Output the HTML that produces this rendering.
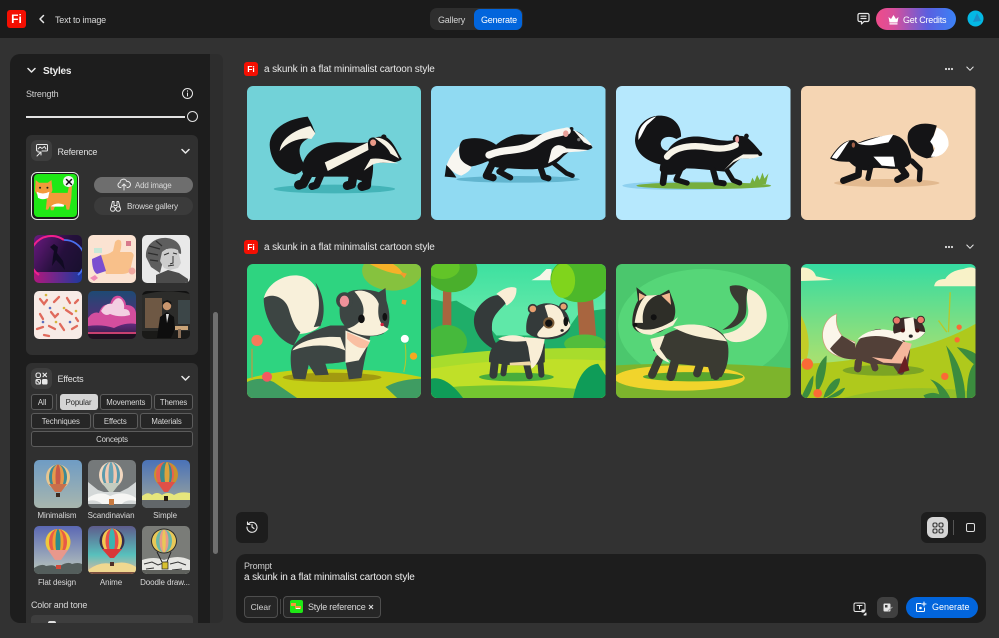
<!DOCTYPE html>
<html><head><meta charset="utf-8"><style>
*{box-sizing:border-box;margin:0;padding:0}
html,body{width:999px;height:638px;overflow:hidden;background:#323232}
body{position:relative;font-family:"Liberation Sans",sans-serif;color:#e4e4e4}
.a{position:absolute}
.t{position:absolute;white-space:nowrap;line-height:12px;font-size:9px;letter-spacing:-.2px;margin-top:1px}
.img{position:absolute;width:174.5px;height:134px;border-radius:6px;overflow:hidden}
.img svg{display:block;width:100%;height:100%}
.th{position:absolute;width:48px;height:48px;border-radius:5px;overflow:hidden}
.th svg{display:block;width:100%;height:100%}
.tag{position:absolute;height:16px;border:1px solid #5c5c5c;border-radius:3px;background:#262626;font-size:7.800px;line-height:15px;text-align:center;color:#d8d8d8;letter-spacing:-.15px}
.lab{position:absolute;width:60px;text-align:center;font-size:8px;line-height:10px;color:#d8d8d8;white-space:nowrap;letter-spacing:-.1px}
.fi{position:absolute;background:#f40f02;border-radius:3px;color:#fff;font-weight:bold;text-align:center}
svg.i{position:absolute;fill:none;stroke:#e8e8e8;stroke-width:1.2;stroke-linecap:round;stroke-linejoin:round}
.l{fill:none;stroke-linecap:round;stroke-linejoin:round}
</style></head><body>

<!-- header -->
<div class="a" style="left:0;top:0;width:999px;height:38px;background:#1b1b1b"></div>
<div class="fi" style="left:7px;top:9.500px;width:19px;height:18.500px;font-size:12px;line-height:18.500px">Fi</div>
<svg class="i" style="left:38px;top:14px;stroke-width:1.500" width="8" height="10" viewBox="0 0 8 10"><path d="M5.500 1.500 2 5l3.500 3.500"/></svg>
<div class="t" style="left:55px;top:13px;color:#d8d8d8">Text to image</div>
<div class="a" style="left:430px;top:8px;width:93px;height:22px;background:#2e2e2e;border-radius:7px"></div>
<div class="a" style="left:474px;top:8.500px;width:48px;height:21px;background:#0265dc;border-radius:6px"></div>
<div class="t" style="left:438px;top:13px;color:#d0d0d0">Gallery</div>
<div class="t" style="left:481px;top:13px;color:#fff">Generate</div>
<svg class="i" style="left:857px;top:12px" width="13" height="14" viewBox="0 0 13 14"><path d="M2.500 1.500h8a1.500 1.500 0 0 1 1.500 1.500v5a1.500 1.500 0 0 1-1.500 1.500H7L4.500 12V9.500h-2A1.500 1.500 0 0 1 1 8V3a1.500 1.500 0 0 1 1.500-1.500zM4 4.200h5M4 6.500h5"/></svg>
<div class="a" style="left:876px;top:8px;width:80px;height:22px;border-radius:11px;background:linear-gradient(90deg,#ee4c8a 0%,#d84f9b 22%,#5a5fe0 65%,#3b82f6 100%)"></div>
<svg class="a" style="left:887px;top:14px" width="13" height="11" viewBox="0 0 13 11"><path fill="#fff" d="M1.500 3 4 5 6.500 1 9 5l2.500-2-1 5.500h-8zM2.500 9.200h8v1.300h-8z"/></svg>
<div class="t" style="left:903px;top:13px;color:#fff">Get Credits</div>
<svg class="a" style="left:967px;top:10px" width="17" height="17" viewBox="0 0 17 17"><circle cx="8.500" cy="8.500" r="8" fill="#04b8e4"/><path d="M10 3 14 11 6 12z" fill="#1a8fc8"/></svg>

<!-- sidebar -->
<div class="a" style="left:205px;top:54px;width:18px;height:569px;background:#2d2d2d;border-radius:0 6px 6px 0"></div>
<div class="a" style="left:213px;top:312px;width:5px;height:242px;background:#6f6f6f;border-radius:3px"></div>
<div class="a" style="left:10px;top:54px;width:200px;height:569px;background:#1d1d1d;border-radius:10px 0 0 10px"></div>
<svg class="i" style="left:27px;top:67px;stroke-width:1.500" width="9" height="7" viewBox="0 0 9 7"><path d="M1 1.500 4.500 5 8 1.500"/></svg>
<div class="t" style="left:43px;top:65px;font-size:10px;font-weight:bold;color:#eee">Styles</div>
<div class="t" style="left:26px;top:87px;color:#cfcfcf">Strength</div>
<svg class="i" style="left:181px;top:87px;stroke-width:1" width="13" height="13" viewBox="0 0 13 13"><circle cx="6.500" cy="6.500" r="5"/><path d="M6.500 6v3M6.500 3.800v.4"/></svg>
<div class="a" style="left:26px;top:116px;width:159px;height:1.500px;background:#e2e2e2"></div>
<div class="a" style="left:187px;top:111px;width:11px;height:11px;border:1.300px solid #e2e2e2;border-radius:50%"></div>

<!-- reference card -->
<div class="a" style="left:26px;top:135px;width:172px;height:220px;background:#303030;border-radius:6px"></div>
<div class="a" style="left:31px;top:140px;width:21px;height:21px;background:#3e3e3e;border-radius:6px"></div>
<svg class="i" style="left:35px;top:143px;stroke-width:1" width="14" height="14" viewBox="0 0 14 14"><path d="M3 8H2.500a1 1 0 0 1-1-1V2.500a1 1 0 0 1 1-1h9a1 1 0 0 1 1 1V7a1 1 0 0 1-1 1H7"/><path d="M3 6l2-2 2 1.500L9.500 3.500 11 6M2 13l4-4M3 9h3v3"/></svg>
<div class="t" style="left:57.500px;top:145px;color:#e0e0e0">Reference</div>
<svg class="i" style="left:181px;top:148px;stroke-width:1.500" width="9" height="7" viewBox="0 0 9 7"><path d="M1 1.500 4.500 5 8 1.500"/></svg>
<div class="a" style="left:31px;top:172px;width:47.500px;height:47.500px;border:1.200px solid #e8e8e8;border-radius:6px;background:#1b1b1b"></div>
<div class="a" style="left:33.500px;top:174px;width:43px;height:43px;border-radius:4px;overflow:hidden">
<svg width="43" height="43" viewBox="100 522 128 128" style="display:block"><rect x="100" y="522" width="128" height="128" fill="#1fe816"/><path d="M135 578h65l4-20h9l-2 36-6 34h-8l-3-14h-30l-6 16h-8l-2-14-6 12h-7l3-28z" fill="#f39a3a"/><path d="M150 618q20-14 40-4l-2 5h-28z" fill="#fff"/><path d="M105 540l10 8h26l11-8 3 30q-5 18-25 20-22-1-27-18z" fill="#f39a3a"/><path d="M108 575q18 10 38 0l-4 18q-16 8-30 0z" fill="#fff"/><circle cx="118" cy="563" r="3" fill="#222"/><circle cx="140" cy="563" r="3" fill="#222"/></svg></div>
<div class="a" style="left:63px;top:176px;width:10.500px;height:10.500px;background:#f4f4f4;border-radius:50%"></div>
<svg class="a" style="left:64.500px;top:177.500px" width="8" height="8" viewBox="0 0 8 8"><path d="M1.500 1.500l5 5M6.500 1.500l-5 5" stroke="#111" stroke-width="1.500" stroke-linecap="round"/></svg>
<div class="a" style="left:94px;top:176.500px;width:99px;height:16px;background:#6e6e6e;border-radius:8px"></div>
<svg class="i" style="left:117px;top:178px;stroke-width:1" width="14" height="13" viewBox="0 0 14 13"><path d="M4 9.500H3A2.500 2.500 0 0 1 3 4.600 3.500 3.500 0 0 1 9.800 3.500 3 3 0 0 1 11 9.500h-1M7 12V6M5 8l2-2 2 2"/></svg>
<div class="t" style="left:135px;top:178.500px;font-size:8px;color:#d8d8d8">Add image</div>
<div class="a" style="left:94px;top:197px;width:99px;height:18px;background:#3b3b3b;border-radius:9px"></div>
<svg class="i" style="left:109px;top:200px;stroke-width:1" width="13" height="13" viewBox="0 0 13 13"><path d="M3.500 1.500h1.500v4h3v-4h1.500l1.500 6M1.500 9a2.300 2.300 0 1 0 4.600 0 2.300 2.300 0 1 0-4.600 0zM6.900 9a2.300 2.300 0 1 0 4.600 0 2.300 2.300 0 1 0-4.600 0zM3.500 1.500l-1.500 6"/></svg>
<div class="t" style="left:127px;top:200px;font-size:8.200px;color:#d8d8d8">Browse gallery</div>

<!-- ref thumbs -->
<div class="th" style="left:33.500px;top:234.500px"><svg viewBox="0 0 48 48"><defs><linearGradient id="n1" x1="0" y1="0" x2="1" y2="0"><stop offset="0" stop-color="#b0187c"/><stop offset="1" stop-color="#1c3aa0"/></linearGradient><linearGradient id="n0" x1="0" y1="0" x2="1" y2=".6"><stop offset="0" stop-color="#6a1a80"/><stop offset=".6" stop-color="#25103c"/><stop offset="1" stop-color="#1a1030"/></linearGradient></defs><rect width="48" height="48" fill="url(#n0)"/><rect y="37" width="48" height="11" fill="url(#n1)"/><path d="M5 40A20 20 0 0 1 30 5" fill="none" stroke="#f0208c" stroke-width="2"/><path d="M30 5A20 20 0 0 1 44 40" fill="none" stroke="#4a70f0" stroke-width="1.800"/><path d="M16 12l4-3 4 3-1 6 6 8 2 9-5-6-4-4-4 6 1-9 1-6z" fill="#100a22"/></svg></div>
<div class="th" style="left:87.500px;top:234.500px"><svg viewBox="0 0 48 48"><rect width="48" height="48" fill="#fbe3d2"/><path d="M13 20q7 0 12-4l2-9q3-4 6-1 1 5-1 11h11q4 2 2 6l-3 13q-2 3-8 3H18z" fill="#f8c08a"/><path d="M4 24l9-4 5 16-9 3q-5-3-5-15z" fill="#7a4ed0"/><rect x="6" y="13" width="8" height="5" fill="#c8e8d8"/><rect x="38" y="6" width="5" height="5" fill="#d87a8c"/><circle cx="44" cy="36" r="3.500" fill="#f0a8a0"/><path d="M2 43l5-3 3 3-4 3z" fill="#f08ab4"/></svg></div>
<div class="th" style="left:142px;top:234.500px"><svg viewBox="0 0 48 48"><rect width="48" height="48" fill="#e9e9e9"/><path d="M4 22C3 9 14 2 25 3 34 4 40 10 39 19L24 14 20 30 18 38 9 32z" fill="#5e5e5e"/><path d="M20 17Q27 11 36 15L39 28 36 33 28 35 22 33 18 26z" fill="#cdcdcd"/><path d="M14 48V40L26 35 37 38 46 44V48z" fill="#4c4c4c"/><path d="M22 20l5-2M31 18l4 1M31 21v7l-3 1M26 31l6-1" stroke="#333" fill="none"/><path d="M7 11l11 3M6 18l10 2M8 25l8 1M14 6l6 5" stroke="#2e2e2e" stroke-width="1.300"/></svg></div>
<div class="th" style="left:33.500px;top:291px"><svg viewBox="0 0 48 48"><rect width="48" height="48" fill="#f7ebe6"/><g fill="none" stroke="#e06a5c" stroke-width="2.300" stroke-linecap="round"><path d="M6 8l4 5 3-4M20 11l5-5M33 7l3 5M41 12l3-3M6 23l3 5M17 21l4 5 3-3M32 19l6 4M42 27l2 3M3 38l6-2M15 35l6 3M26 33l4 6M38 38l5-3M10 44l5 1"/></g><g fill="#d4b43c"><circle cx="12" cy="4" r="1.300"/><circle cx="30" cy="17" r="1.300"/><circle cx="22" cy="31" r="1.300"/><circle cx="42" cy="20" r="1.300"/></g><g fill="#5a6fc0"><circle cx="16" cy="17" r="1.300"/><circle cx="36" cy="31" r="1.300"/><circle cx="9" cy="31" r="1.300"/></g></svg></div>
<div class="th" style="left:87.500px;top:291px"><svg viewBox="0 0 48 48"><defs><linearGradient id="c1" x1="0" y1="0" x2="0" y2="1"><stop offset="0" stop-color="#1e4a74"/><stop offset=".7" stop-color="#5d2a78"/><stop offset="1" stop-color="#2a1838"/></linearGradient></defs><rect width="48" height="48" fill="url(#c1)"/><path d="M0 27Q5 20 11 22 14 12 22 14 24 3 32 5 38 9 38 14 47 14 48 22V33Q38 31 26 37 14 33 0 35z" fill="#d44e9e"/><path d="M13 20Q18 11 24 13 28 5 33 8 37 12 36 18 42 18 42 24 32 27 22 23 17 26 13 20z" fill="#f3cfe2"/><rect y="41" width="48" height="2" fill="#c84070"/><rect y="43" width="48" height="5" fill="#1e1020"/></svg></div>
<div class="th" style="left:142px;top:291px"><svg viewBox="0 0 48 48"><rect width="48" height="48" fill="#2c2c2a"/><path d="M0 4Q24-3 48 3V0H0z" fill="#111"/><rect x="3" y="7" width="17" height="30" fill="#6e5844"/><rect x="36" y="9" width="12" height="24" fill="#3c4648"/><rect y="40" width="48" height="8" fill="#1a1a18"/><circle cx="25" cy="15" r="4.200" fill="#c9966e"/><path d="M20.800 14q4-6 8.500 0v-3l-4-2-4.500 2z" fill="#111"/><path d="M15 47l3-21 7-5 7 5 1 12-4 9z" fill="#0e0e0e"/><rect x="33" y="35" width="13" height="4" fill="#caa478"/><rect x="36" y="38" width="3" height="9" fill="#8a6f58"/><path d="M24 23l1 9 2-9z" fill="#ddd"/></svg></div>

<!-- effects card -->
<div class="a" style="left:26px;top:362.500px;width:172px;height:260.500px;background:#303030;border-radius:6px 6px 0 0"></div>
<div class="a" style="left:31px;top:368px;width:21px;height:21px;background:#3e3e3e;border-radius:6px"></div>
<svg class="i" style="left:35px;top:372px;stroke-width:1.100" width="13" height="13" viewBox="0 0 13 13"><rect x="1" y="1" width="4.500" height="4.500" rx="1.800"/><path d="M8 1.200l3.500 3.500M11.500 1.200 8 4.700"/><rect x="1" y="7.500" width="4.500" height="4.500" rx="1"/><path d="M1.500 8l3.500 3.500"/><rect x="7.500" y="7.500" width="4.500" height="4.500" rx="1" fill="#e8e8e8"/></svg>
<div class="t" style="left:57.500px;top:372px;color:#e0e0e0">Effects</div>
<svg class="i" style="left:181px;top:375px;stroke-width:1.500" width="9" height="7" viewBox="0 0 9 7"><path d="M1 1.500 4.500 5 8 1.500"/></svg>
<div class="tag" style="left:31px;top:394px;width:22px">All</div>
<div class="a" style="left:55.500px;top:394px;width:1px;height:16px;background:#555"></div>
<div class="tag" style="left:59.500px;top:394px;width:38px;background:#d5d5d5;border-color:#d5d5d5;color:#2a2a2a">Popular</div>
<div class="tag" style="left:100px;top:394px;width:51.500px">Movements</div>
<div class="tag" style="left:154px;top:394px;width:39px">Themes</div>
<div class="tag" style="left:31px;top:412.500px;width:59.500px">Techniques</div>
<div class="tag" style="left:93px;top:412.500px;width:44.500px">Effects</div>
<div class="tag" style="left:140px;top:412.500px;width:53px">Materials</div>
<div class="tag" style="left:31px;top:431px;width:162px">Concepts</div>

<!-- balloons -->
<div class="th" style="left:33.500px;top:459.500px"><svg viewBox="0 0 48 48"><defs><linearGradient id="b1" x1="0" y1="0" x2="0" y2="1"><stop offset="0" stop-color="#6f9cc4"/><stop offset="1" stop-color="#a8b6ae"/></linearGradient></defs><rect width="48" height="48" fill="url(#b1)"/><ellipse cx="24" cy="17" rx="12" ry="12.500" fill="#e8c690"/><ellipse cx="24" cy="17" rx="9" ry="12.500" fill="#3c8a96"/><ellipse cx="24" cy="17" rx="6" ry="12.500" fill="#e49a4c"/><ellipse cx="24" cy="17" rx="2.500" ry="12.500" fill="#c85a48"/><path d="M15 24l6 8h6l6-8z" fill="#c8704c"/><rect x="22" y="33" width="4" height="4" fill="#3a2a20"/></svg></div>
<div class="th" style="left:87.500px;top:459.500px"><svg viewBox="0 0 48 48"><rect width="48" height="48" fill="#75797a"/><path d="M0 22l10 8 6 2 16 0 8-4 8-6v22H0z" fill="#d4d8d8"/><path d="M0 38q12-8 22-2 14-6 26 2v3q-10-2-14 3H14q-6-5-14-3z" fill="#f6f6f4"/><rect y="44" width="48" height="4" fill="#64696a"/><ellipse cx="23" cy="15" rx="12" ry="13" fill="#f2d8c0"/><ellipse cx="23" cy="15" rx="9" ry="13" fill="#5a9aac"/><ellipse cx="23" cy="15" rx="6" ry="13" fill="#f2c8b0"/><ellipse cx="23" cy="15" rx="2.500" ry="13" fill="#6aa4b4"/><path d="M14 23l7 9h4l7-9z" fill="#c4ccc0"/><rect x="21" y="39" width="5" height="6" fill="#c87a40"/></svg></div>
<div class="th" style="left:142px;top:459.500px"><svg viewBox="0 0 48 48"><defs><linearGradient id="b3" x1="0" y1="0" x2="0" y2="1"><stop offset="0" stop-color="#4a72b8"/><stop offset="1" stop-color="#a2a89a"/></linearGradient></defs><rect width="48" height="48" fill="url(#b3)"/><path d="M0 36q6-5 10-1 5-4 10 0 6-4 12 0 6-4 16-2v7H0z" fill="#e6e67c"/><rect y="40" width="48" height="8" fill="#62676a"/><ellipse cx="24" cy="14.500" rx="12" ry="12.500" fill="#c8922c"/><ellipse cx="23" cy="14.500" rx="9" ry="12.500" fill="#e86050"/><ellipse cx="24" cy="14.500" rx="6" ry="12.500" fill="#3b8a8c"/><ellipse cx="25" cy="14.500" rx="2.500" ry="12.500" fill="#dca23c"/><path d="M15 22l7 10h4l7-10z" fill="#e05048"/><rect x="22" y="36" width="4" height="5" fill="#2a2018"/></svg></div>
<div class="lab" style="left:27px;top:511px">Minimalism</div>
<div class="lab" style="left:81px;top:511px">Scandinavian</div>
<div class="lab" style="left:135px;top:511px">Simple</div>
<div class="th" style="left:33.500px;top:526px"><svg viewBox="0 0 48 48"><defs><linearGradient id="b4" x1="0" y1="0" x2="0" y2="1"><stop offset="0" stop-color="#5b68b4"/><stop offset="1" stop-color="#bccabc"/></linearGradient></defs><rect width="48" height="48" fill="url(#b4)"/><path d="M0 42q8-5 12-2 8-2 10 1l4-1q8-5 12-2 6-2 10 0v10H0z" fill="#545e5c"/><ellipse cx="24" cy="16" rx="12.500" ry="13" fill="#f0c83c"/><ellipse cx="24" cy="16" rx="9" ry="13" fill="#e85a48"/><ellipse cx="24" cy="16" rx="5.500" ry="13" fill="#f0a030"/><ellipse cx="24" cy="16" rx="2.500" ry="13" fill="#2c8c8c"/><path d="M14 24l7 10h6l7-10z" fill="#e8988c"/><rect x="22" y="39" width="5" height="4" fill="#d04838"/></svg></div>
<div class="th" style="left:87.500px;top:526px"><svg viewBox="0 0 48 48"><defs><linearGradient id="b5" x1="0" y1="0" x2="0" y2="1"><stop offset="0" stop-color="#5e5c8c"/><stop offset=".6" stop-color="#58c0bc"/><stop offset="1" stop-color="#e4b8a0"/></linearGradient></defs><rect width="48" height="48" fill="url(#b5)"/><path d="M0 44q12-9 24-6 14-4 24 3v7H0z" fill="#f0d890"/><path d="M0 46h48v2H0z" fill="#7c5040"/><ellipse cx="24" cy="15" rx="12.500" ry="12.500" fill="#3a2c48"/><ellipse cx="24" cy="15" rx="10" ry="12.500" fill="#f2c850"/><ellipse cx="24" cy="15" rx="6.500" ry="12.500" fill="#e8504c"/><ellipse cx="24" cy="15" rx="3" ry="12.500" fill="#3cb4b0"/><path d="M14 23l8 9h4l8-9z" fill="#d83838"/><rect x="22" y="36" width="4" height="4" fill="#503028"/></svg></div>
<div class="th" style="left:142px;top:526px"><svg viewBox="0 0 48 48"><rect width="48" height="48" fill="#7a7c78"/><path d="M0 34q12-4 22 0 14-6 26 0v14H0z" fill="#e6e6e2"/><path d="M2 38l8-2 6 3 8-3M28 38l8-2 8 3M4 43l8-1M30 44l10-1" stroke="#333" fill="none"/><rect y="44" width="48" height="4" fill="#5e605c"/><ellipse cx="22" cy="15" rx="13" ry="12.500" fill="#2a2a2a"/><ellipse cx="22" cy="15" rx="12" ry="11.500" fill="#e8c858"/><ellipse cx="22" cy="15" rx="8" ry="11.500" fill="#6ab8a8"/><ellipse cx="22" cy="15" rx="4.500" ry="11.500" fill="#e89a88"/><ellipse cx="22" cy="15" rx="1.800" ry="11.500" fill="#e8c858"/><path d="M15 26l5 10M29 26l-4 10" stroke="#222"/><rect x="20" y="36" width="6" height="7" fill="#d8c030" stroke="#222" stroke-width=".7"/></svg></div>
<div class="lab" style="left:27px;top:577.500px">Flat design</div>
<div class="lab" style="left:81px;top:577.500px">Anime</div>
<div class="lab" style="left:135px;top:577.500px">Doodle draw...</div>
<div class="t" style="left:31px;top:598px;color:#d8d8d8">Color and tone</div>
<div class="a" style="left:31px;top:615px;width:162px;height:8px;background:#3e3e3e;border-radius:4px 4px 0 0"></div>
<div class="a" style="left:48px;top:621px;width:8px;height:2px;background:#e0e0e0;border-radius:4px 4px 0 0"></div>

<!-- row headers -->
<div class="fi" style="left:244px;top:62px;width:14px;height:14px;font-size:8.500px;line-height:14px">Fi</div>
<div class="t" style="left:264px;top:63px;font-size:10px;color:#e8e8e8;letter-spacing:-.13px">a skunk in a flat minimalist cartoon style</div>
<svg class="a" style="left:944px;top:67px" width="10" height="4"><circle cx="2" cy="2" r="1.100" fill="#ddd"/><circle cx="5" cy="2" r="1.100" fill="#ddd"/><circle cx="8" cy="2" r="1.100" fill="#ddd"/></svg>
<svg class="i" style="left:966px;top:66px;stroke-width:1" width="8" height="6" viewBox="0 0 8 6"><path d="M.8 1 4 4.300 7.200 1"/></svg>
<div class="fi" style="left:244px;top:239.500px;width:14px;height:14px;font-size:8.500px;line-height:14px">Fi</div>
<div class="t" style="left:264px;top:240.500px;font-size:10px;color:#e8e8e8;letter-spacing:-.13px">a skunk in a flat minimalist cartoon style</div>
<svg class="a" style="left:944px;top:245px" width="10" height="4"><circle cx="2" cy="2" r="1.100" fill="#ddd"/><circle cx="5" cy="2" r="1.100" fill="#ddd"/><circle cx="8" cy="2" r="1.100" fill="#ddd"/></svg>
<svg class="i" style="left:966px;top:244px;stroke-width:1" width="8" height="6" viewBox="0 0 8 6"><path d="M.8 1 4 4.300 7.200 1"/></svg>

<!-- image 1 -->
<div class="img" style="left:246.700px;top:86px"><svg viewBox="50 93 523 402" preserveAspectRatio="none"><rect x="50" y="93" width="523" height="402" fill="#72d2d8"/><ellipse cx="312" cy="402" rx="182" ry="13" fill="#44b4b8"/>
<path d="M195 358C150 352 120 320 118 270 118 225 165 192 232 185L245 210 255 235 235 250C205 262 200 290 218 322 225 340 215 352 195 358z" fill="#141416"/>
<path d="M148 288C152 250 192 225 240 213L255 235 243 252C210 246 172 260 148 288z" fill="#f6f2e4"/>
<path d="M215 345C215 295 260 265 310 262 350 260 390 268 420 260L428 330C428 350 426 370 420 385L350 365 270 365C240 368 215 365 215 345z" fill="#141416"/>
<g class="l" stroke="#141416"><path d="M240 345 218 386 205 390" stroke-width="28"/><path d="M275 350 258 390 245 394" stroke-width="22"/><path d="M370 350 364 388 350 392" stroke-width="26"/><path d="M410 345 408 390 395 394" stroke-width="28"/></g>
<path d="M412 268C420 248 445 240 470 248 490 262 500 290 514 312 505 323 470 326 440 322L415 330z" fill="#141416"/><circle cx="428" cy="262" r="15" fill="#141416"/><circle cx="460" cy="246" r="8" fill="#141416"/>
<path d="M283 322 412 262 414 285 292 348z" fill="#f6f2e4"/><path d="M432 248C465 245 492 275 506 311L480 296C472 275 452 264 432 248z" fill="#f6f2e4"/><path d="M400 347 420 312C445 306 480 318 503 325 470 324 440 320 425 330z" fill="#f6f2e4"/><ellipse cx="428" cy="263" rx="9" ry="10" fill="#eb9a88"/></svg></div>
<!-- image 2 -->
<div class="img" style="left:431.400px;top:86px"><svg viewBox="604 93 523 402" preserveAspectRatio="none"><rect x="604" y="93" width="523" height="402" fill="#90daf2"/><ellipse cx="865" cy="373" rx="185" ry="10" fill="#62b5cf"/>
<path d="M800 270C770 248 730 245 700 255 680 270 690 310 700 335 730 340 770 320 790 312z" fill="#141416"/>
<path d="M690 272C670 290 655 315 650 335 665 345 680 360 695 362 720 350 725 340 725 335 700 325 680 310 690 272z" fill="#f8f6f0"/>
<path d="M650 330 645 365 680 368C670 350 660 340 650 330z" fill="#141416"/>
<path d="M775 310C775 280 830 235 880 238 920 242 960 235 1000 225L1020 290C1000 300 985 325 975 325 950 345 900 345 840 340 800 340 775 335 775 310z" fill="#141416"/>
<g class="l" stroke="#141416"><path d="M790 322 770 362 790 368" stroke-width="22"/><path d="M830 330 808 350 842 368" stroke-width="17"/><path d="M930 330 942 366 956 370" stroke-width="18"/><path d="M972 325 1010 355 1028 362" stroke-width="14"/></g>
<path d="M995 235C1020 220 1050 225 1065 248 1075 262 1085 268 1088 278 1080 288 1040 292 1010 288 990 280 985 250 995 235z" fill="#141416"/><circle cx="1007" cy="235" r="13" fill="#141416"/><circle cx="1025" cy="222" r="6" fill="#141416"/>
<path d="M778 300C830 277 880 295 925 257 950 237 990 234 1012 228" class="l" stroke="#f8f6f0" stroke-width="22"/><path d="M1030 224C1055 235 1080 260 1088 275L1062 262z" fill="#f8f6f0"/>
<path d="M955 325 965 285C975 268 990 265 1010 280L1075 285C1050 293 1020 288 1000 295 985 308 970 318 955 325z" fill="#f8f6f0"/><ellipse cx="1008" cy="236" rx="8" ry="10" fill="#e8a098"/><circle cx="1047" cy="254" r="5" fill="#777"/><circle cx="1082" cy="274" r="3.500" fill="#111"/></svg></div>
<!-- image 3 -->
<div class="img" style="left:616.300px;top:86px"><svg viewBox="19 93 523 402" preserveAspectRatio="none"><rect x="19" y="93" width="523" height="402" fill="#b6e8fd"/><ellipse cx="220" cy="392" rx="182" ry="13" fill="#8ed0ef"/><ellipse cx="282" cy="392" rx="202" ry="10" fill="#76ae3e"/><path d="M420 388l8-20 6 12 8-20 8 15 8-22 6 18 12-16-8 32z" fill="#76ae3e"/>
<path d="M165 330C115 325 78 295 76 258 76 215 110 182 150 182 190 182 215 210 214 245L200 252C180 240 155 245 153 265 153 285 172 290 180 285z" fill="#141416"/>
<path d="M86 245C86 215 110 192 140 184L112 210C102 225 95 245 86 255z" fill="#fff"/>
<path d="M150 345C150 320 165 300 175 285 195 250 240 242 270 245 310 250 340 262 375 255L400 250 420 270 395 310C375 320 360 345 345 350 300 345 260 340 230 340 200 365 160 365 150 345z" fill="#141416"/>
<g class="l" stroke="#141416"><path d="M165 345 160 383" stroke-width="20"/><path d="M212 345 199 374 232 384" stroke-width="16"/><path d="M310 345 320 382 342 385" stroke-width="18"/><path d="M345 335 370 376 390 384" stroke-width="15"/></g>
<path d="M370 262C375 240 395 238 415 250 435 268 448 285 458 297 440 312 410 312 395 310z" fill="#141416"/><circle cx="381" cy="251" r="12" fill="#141416"/><circle cx="410" cy="243" r="7" fill="#141416"/>
<path d="M172 305C200 270 260 270 300 278 330 283 355 282 378 270" class="l" stroke="#f8f4e8" stroke-width="19"/>
<path d="M343 345 372 315 400 298 458 298C445 312 410 312 395 310L370 322z" fill="#f8f4e8"/><ellipse cx="382" cy="253" rx="6" ry="10" fill="#eda0a0"/><circle cx="451" cy="297" r="6" fill="#111"/></svg></div>
<!-- image 4 -->
<div class="img" style="left:801px;top:86px"><svg viewBox="573 93 523 402" preserveAspectRatio="none"><rect x="573" y="93" width="523" height="402" fill="#f5d5b3"/><ellipse cx="830" cy="384" rx="158" ry="12" fill="#e2b98f"/>
<path d="M950 310C905 300 885 265 895 232 908 205 945 200 980 212L965 260 975 305z" fill="#141416"/><path d="M980 218C1005 225 1018 250 1015 272 1005 298 985 308 962 305L975 280 960 260 972 240z" fill="#fff"/>
<path d="M700 300C720 265 780 245 850 240 885 245 900 280 905 315 900 340 865 345 830 340 800 340 790 335 780 345 760 350 730 340 700 300z" fill="#141416"/>
<g class="l" stroke="#141416"><path d="M905 318 930 342 928 374" stroke-width="16"/><path d="M870 335 888 360 862 374" stroke-width="20"/><path d="M782 335 774 370" stroke-width="16"/><path d="M748 325 745 360 700 377" stroke-width="20"/></g>
<path d="M660 310C680 280 700 255 730 255 750 262 760 290 740 320 710 320 680 322 660 310z" fill="#141416"/>
<path d="M665 308C680 285 700 262 718 258 705 275 695 295 680 312z" fill="#fff"/>
<path d="M742 265C770 260 810 240 850 238L835 262 790 270C770 272 755 270 742 265z" fill="#fff"/><path d="M790 305 850 305 855 335 815 332z" fill="#fff"/><ellipse cx="730" cy="270" rx="5" ry="8" fill="#a06048"/></svg></div>

<!-- image 5 -->
<div class="img" style="left:246.700px;top:263.500px"><svg viewBox="50 85 523 403" preserveAspectRatio="none"><rect x="50" y="85" width="523" height="403" fill="#2ed480"/><ellipse cx="485" cy="105" rx="90" ry="60" fill="#86c23e"/><path d="M418 85h70q25 15 30 32-50-4-100-32z" fill="#f6b128"/><path d="M515 110l14 4-8 14-6-8-6-4z" fill="#f39a2c"/><path d="M515 192l14 2-4 14-12-4z" fill="#f39a2c"/>
<path d="M50 488V430Q180 395 320 402 470 402 573 425V488z" fill="#c4cf16"/><path d="M50 488V440Q90 420 130 440L200 488zM465 455Q510 430 573 430V488H500z" fill="#3f9c62"/><ellipse cx="305" cy="426" rx="148" ry="14" fill="#a29a10"/>
<path d="M65 430V340" stroke="#e08e34" stroke-width="3"/><circle cx="80" cy="315" r="17" fill="#f67a5a"/><circle cx="110" cy="424" r="15" fill="#f25a60"/><circle cx="523" cy="310" r="12" fill="#fff"/><circle cx="549" cy="362" r="11" fill="#f6a820"/><path d="M520 410Q530 370 524 325" fill="none" stroke="#b8c828" stroke-width="3"/>
<path d="M100 190C110 140 170 110 215 122 260 135 285 200 275 260 265 285 230 295 205 295z" fill="#f8f0da"/><path d="M255 140C285 185 285 240 270 272L250 275C270 230 270 190 255 140z" fill="#3d4543"/>
<path d="M100 188C125 170 165 185 175 220 185 255 195 280 210 290L190 330C140 315 100 250 100 188z" fill="#3d4543"/>
<path d="M182 350C185 320 230 290 300 270L350 270 420 300 410 340C400 380 395 420 393 428L355 432 345 378C330 382 300 385 285 385L295 418 255 420 235 388 225 432 190 430C180 400 180 370 182 350z" fill="#3d4543"/>
<path d="M186 345C205 315 270 300 330 305L345 345C300 325 240 325 186 345z" fill="#f8f0da"/><path d="M345 285 420 315 385 375 345 382z" fill="#f8f0da"/><path d="M350 290 418 320 410 335C390 345 370 330 350 310z" fill="#f9bfa2"/>
<path d="M330 250C320 200 340 165 380 163 410 160 430 165 445 170L465 157 468 195C482 240 480 275 458 295 420 312 350 300 330 250z" fill="#3d4543"/><path d="M372 168C400 158 435 175 445 205 440 240 445 270 475 280 455 305 395 310 350 280 400 265 420 220 372 168z" fill="#f8f0da"/><circle cx="342" cy="195" r="25" fill="#3d4543"/><ellipse cx="342" cy="197" rx="14" ry="17" fill="#f0929a"/><ellipse cx="393" cy="250" rx="10" ry="13" fill="#111"/><ellipse cx="463" cy="244" rx="7" ry="12" fill="#111"/><circle cx="455" cy="267" r="5" fill="#d81e3c"/></svg></div>
<!-- image 6 -->
<div class="img" style="left:431.400px;top:263.500px"><svg viewBox="604 85 523 403" preserveAspectRatio="none"><defs><linearGradient id="g6" x1="0" y1="0" x2="0" y2="1"><stop offset="0" stop-color="#3de0a0"/><stop offset=".35" stop-color="#5fe8a8"/></linearGradient></defs><rect x="604" y="85" width="523" height="403" fill="url(#g6)"/>
<path d="M604 190 650 200 680 195 740 230 800 300 1000 300 1050 230 1127 220V400H604z" fill="#1fae69"/><path d="M905 134 930 120 950 100 965 100V134z" fill="#f6f6e8"/><path d="M640 165H665L665 295H638z" fill="#a8653f"/><ellipse cx="665" cy="105" rx="78" ry="65" fill="#4aaf2c"/><ellipse cx="640" cy="95" rx="50" ry="35" fill="#62c428"/><path d="M1042 185 1088 170 1100 315 1048 300z" fill="#a8653f"/><ellipse cx="1050" cy="130" rx="88" ry="70" fill="#4db82a"/><ellipse cx="1000" cy="135" rx="36" ry="52" fill="#80d41c"/>
<ellipse cx="650" cy="320" rx="62" ry="52" fill="#46b93c"/><ellipse cx="1065" cy="325" rx="62" ry="28" fill="#52bd3c"/><path d="M604 365Q800 335 1127 338V488H604z" fill="#a8dc2c"/><path d="M604 400Q850 360 1127 375V488H604z" fill="#c0e028"/><path d="M604 460Q850 435 1127 470V488H604z" fill="#74c530"/><ellipse cx="860" cy="425" rx="112" ry="13" fill="#48ad3c"/><path d="M604 488V430Q650 420 700 488zM1030 488Q1050 390 1105 385L1127 420V488z" fill="#0f9c58"/>
<path d="M790 340C735 310 715 250 750 210 775 180 815 165 835 195 820 215 790 235 787 265 785 290 790 310 800 325z" fill="#343a3a"/><path d="M800 175C825 155 850 150 860 158 862 180 850 200 830 210 825 195 815 185 800 175z" fill="#f9eed6"/>
<path d="M778 380C775 340 800 305 850 303L945 325 945 380C930 390 880 392 830 388L808 385z" fill="#343a3a"/><g class="l" stroke="#343a3a"><path d="M795 380 791 418" stroke-width="24"/><path d="M825 385 821 414" stroke-width="18"/><path d="M890 385 899 422" stroke-width="20"/><path d="M932 380 935 418" stroke-width="18"/></g>
<path d="M945 310C940 340 930 385 905 400L895 335 885 305z" fill="#f9eed6"/><path d="M805 310C830 295 875 295 900 315 870 320 830 320 805 310z" fill="#f9eed6"/><path d="M840 382 900 378 905 390 840 390z" fill="#f0d8a8"/>
<path d="M890 290C885 245 905 205 950 203 1000 203 1025 240 1020 280 1000 320 920 320 890 290z" fill="#343a3a"/><circle cx="909" cy="220" r="15" fill="#343a3a"/><circle cx="909" cy="220" r="10" fill="#e8a070"/><circle cx="1001" cy="213" r="13" fill="#343a3a"/><circle cx="1001" cy="213" r="9" fill="#e8a070"/><path d="M945 210C970 200 995 215 1002 245 1015 255 1020 262 1022 270 1010 300 960 310 930 305 905 295 950 275 955 245 950 225 945 215 945 210z" fill="#f9eed6"/><circle cx="957" cy="262" r="17" fill="#7c5c38"/><circle cx="957" cy="263" r="11" fill="#111"/><ellipse cx="1008" cy="258" rx="7" ry="14" fill="#111"/><ellipse cx="997" cy="285" rx="5" ry="4" fill="#222"/></svg></div>
<!-- image 7 -->
<div class="img" style="left:616.300px;top:263.500px"><svg viewBox="19 85 523 403" preserveAspectRatio="none"><rect x="19" y="85" width="523" height="403" fill="#4bc76d"/><ellipse cx="280" cy="270" rx="255" ry="170" fill="#56d678"/>
<path d="M19 390Q280 375 542 398V488H19z" fill="#7db42c"/><ellipse cx="210" cy="428" rx="195" ry="38" fill="#f1d42c"/><ellipse cx="250" cy="424" rx="150" ry="14" fill="#58a62e"/>
<path d="M415 160C455 170 475 215 470 250 465 290 420 320 380 320 360 320 345 310 340 295 385 290 420 260 415 220 412 195 408 180 415 160z" fill="#f8efd4"/><path d="M360 152C375 145 405 150 415 162 405 185 415 225 405 245 390 270 365 280 338 283 370 265 392 235 385 205 375 190 358 175 360 152z" fill="#3a3a32"/>
<path d="M130 345C135 300 200 275 270 270 320 272 358 295 356 350 356 385 345 410 335 425L305 430 295 395 200 385z" fill="#3a3a32"/><g class="l" stroke="#3a3a32"><path d="M148 370 127 418" stroke-width="24"/><path d="M195 380 183 424" stroke-width="26"/><path d="M270 390 262 414" stroke-width="24"/><path d="M332 390 318 422" stroke-width="24"/></g>
<path d="M122 310 165 300 150 340 180 382C150 372 130 350 122 310z" fill="#f8efd4"/><path d="M190 275C240 260 320 262 352 318 300 310 240 305 190 275z" fill="#f8efd4"/>
<path d="M68 268C66 235 78 205 85 195L80 155 112 180 150 178 178 162 192 200C205 240 190 272 150 290 110 300 75 295 68 268z" fill="#2e2e28"/><path d="M88 172 108 182 88 196zM155 180 180 172 184 208z" fill="#f2b890"/><path d="M100 262C95 225 110 190 145 178L110 180C90 195 78 235 75 262z" fill="#f8efd4"/><path d="M75 270C100 295 160 280 205 245L190 270 125 298C100 298 80 290 75 270z" fill="#f8efd4"/><circle cx="132" cy="245" r="9" fill="#111"/><ellipse cx="76" cy="268" rx="7" ry="6" fill="#111"/></svg></div>
<!-- image 8 -->
<div class="img" style="left:801px;top:263.500px"><svg viewBox="573 85 523 403" preserveAspectRatio="none"><defs><linearGradient id="g8" x1="0" y1="0" x2="0" y2="1"><stop offset="0" stop-color="#35dca2"/><stop offset=".7" stop-color="#a4e072"/></linearGradient></defs><rect x="573" y="85" width="523" height="403" fill="url(#g8)"/>
<path d="M573 95Q610 95 618 122L670 133 573 136zM972 152Q975 130 1005 130 1020 105 1060 100 1085 90 1096 100V152z" fill="#f8f2c8"/><path d="M573 385Q700 385 880 345 1000 320 1096 265V488H573z" fill="#afc91c"/><path d="M700 488Q880 440 1096 470V488z" fill="#94c028"/><ellipse cx="820" cy="405" rx="122" ry="16" fill="#7ca524"/>
<path d="M1020 170 1015 290M985 255 1010 290" fill="none" stroke="#b8c828" stroke-width="4"/><path d="M573 240C600 290 600 340 590 370L573 372z" fill="#c3cc28"/>
<path d="M620 470C610 420 625 380 650 360 650 410 640 450 620 470zM640 488C650 450 675 425 690 430 690 450 670 480 640 488zM650 488C680 470 700 455 705 458 695 480 680 488 650 488zM573 488C590 450 600 430 610 420 612 450 600 480 590 488zM1040 488C1030 420 1020 370 1008 330 1050 380 1065 440 1065 488zM1096 390C1070 370 1050 345 1040 335 1070 340 1090 350 1096 355zM990 488C985 460 975 445 960 432 990 440 1010 465 1020 488zM940 480C965 468 985 470 1000 488H945zM1096 488H1070C1070 440 1075 400 1096 380z" fill="#3b8c3e"/><circle cx="592" cy="386" r="17" fill="#fb6a36"/><circle cx="623" cy="474" r="13" fill="#fb6a36"/><circle cx="1004" cy="423" r="11" fill="#fb6a36"/><circle cx="1047" cy="275" r="8" fill="#fb6a36"/><circle cx="1041" cy="313" r="8" fill="#fb6a36"/>
<path d="M680 235C640 250 625 300 650 340 670 365 710 370 735 370L735 320 700 305C685 290 675 265 680 235z" fill="#fbf6ea" stroke="#d09878" stroke-width="2"/><path d="M660 340C675 320 685 315 695 300L735 325 735 372C705 372 680 365 660 340z" fill="#524038"/>
<path d="M732 370C728 335 750 285 810 280L880 310 900 345 893 395C880 400 820 385 780 385z" fill="#524038"/><g class="l" stroke="#524038"><path d="M745 380 743 400" stroke-width="22"/><path d="M790 382 795 398" stroke-width="20"/><path d="M860 390 873 408" stroke-width="20"/></g>
<path d="M742 312C770 280 820 275 860 290L880 320C830 300 785 295 742 312z" fill="#fbf6ea"/><path d="M785 365 845 372 880 318 905 325 885 385 820 382z" fill="#f5b79c"/><path d="M862 415 885 360 898 405z" fill="#6a1e22"/>
<path d="M850 290C845 262 860 245 890 245 920 245 945 262 945 290 930 320 865 325 850 290z" fill="#3b2a28"/><circle cx="860" cy="255" r="11" fill="#eb7a6a" stroke="#3b2a28" stroke-width="3"/><circle cx="932" cy="253" r="11" fill="#eb7a6a" stroke="#3b2a28" stroke-width="3"/><path d="M882 250 910 245 915 285 945 290C925 322 870 325 850 295L885 285z" fill="#fbf6ea"/><circle cx="878" cy="285" r="6" fill="#4a1010"/><circle cx="922" cy="285" r="6" fill="#4a1010"/><ellipse cx="902" cy="302" rx="6" ry="5" fill="#222"/></svg></div>

<!-- history -->
<div class="a" style="left:236px;top:511.500px;width:31.500px;height:31.500px;background:#1d1d1d;border-radius:6px"></div>
<svg class="i" style="left:246px;top:521px;stroke-width:1.100" width="12" height="12" viewBox="0 0 12 12"><path d="M2 3.300A5 5 0 1 1 1 6M1.500 1v2.500H4M6 3.500V6l2 1.500"/></svg>
<!-- view toggle -->
<div class="a" style="left:921px;top:511.500px;width:64.500px;height:31.500px;background:#1d1d1d;border-radius:6px"></div>
<div class="a" style="left:927px;top:517px;width:21px;height:21px;background:#d5d5d5;border-radius:6px"></div>
<svg class="a" style="left:931.500px;top:521.500px" width="12" height="12" viewBox="0 0 12 12" fill="none" stroke="#333" stroke-width="1.100"><rect x="1" y="1" width="4" height="4" rx="1.500"/><rect x="7" y="1" width="4" height="4" rx="1.500"/><rect x="1" y="7" width="4" height="4" rx="1.500"/><rect x="7" y="7" width="4" height="4" rx="1.500"/></svg>
<div class="a" style="left:953px;top:520px;width:1px;height:15px;background:#555"></div>
<div class="a" style="left:965.500px;top:522.500px;width:9.500px;height:9.500px;border:1.200px solid #ddd;border-radius:2px"></div>

<!-- prompt -->
<div class="a" style="left:236px;top:554px;width:749.500px;height:69px;background:#1d1d1d;border-radius:10px"></div>
<div class="t" style="left:244px;top:559px;color:#cfcfcf">Prompt</div>
<div class="t" style="left:244px;top:571px;font-size:10px;color:#eee;letter-spacing:-.13px">a skunk in a flat minimalist cartoon style</div>
<div class="a" style="left:244px;top:596px;width:33.500px;height:21.500px;border:1px solid #4e4e4e;border-radius:4px;background:#262626;font-size:8.500px;line-height:20.500px;text-align:center;color:#d4d4d4">Clear</div>
<div class="a" style="left:280px;top:599px;width:1px;height:15px;background:#444"></div>
<div class="a" style="left:283px;top:596px;width:97.500px;height:21.500px;border:1px solid #4e4e4e;border-radius:4px;background:#262626"></div>
<svg class="a" style="left:290px;top:600px;border-radius:2px" width="13" height="13" viewBox="0 0 13 13"><rect width="13" height="13" fill="#1fe816"/><path d="M1 3h5v3H1zM5 6h6v3H5z" fill="#f39a3a"/><path d="M6 8h4v1H6z" fill="#fff"/></svg>
<div class="t" style="left:308px;top:600px;font-size:9px;color:#d8d8d8">Style reference</div>
<svg class="a" style="left:368px;top:604px" width="6" height="6" viewBox="0 0 6 6"><path d="M1 1l4 4M5 1 1 5" stroke="#ddd" stroke-width="1.100"/></svg>
<svg class="i" style="left:853px;top:602px;stroke-width:1" width="15" height="14" viewBox="0 0 15 14"><rect x="1" y="1" width="11" height="8.500" rx="1.500"/><path d="M4 3.500h5M6.500 3.500V7"/><rect x="9" y="8" width="2" height="2" fill="#e8e8e8"/><path d="M13 11v2h-2z" fill="#e8e8e8"/></svg>
<div class="a" style="left:877px;top:597px;width:21px;height:21px;background:#404040;border-radius:6px"></div>
<svg class="a" style="left:883px;top:603px" width="10" height="10" viewBox="0 0 10 10"><rect x=".5" y=".5" width="7" height="8" rx="1" fill="#e6e6e6"/><rect x="2" y="2" width="2.500" height="2.500" fill="#404040"/><path d="M5 8l2-2 2.500-2" stroke="#a0a0a0" fill="none"/></svg>
<div class="a" style="left:905.500px;top:596.500px;width:72.500px;height:21px;background:#0265dc;border-radius:11px"></div>
<svg class="i" style="left:915px;top:601px;stroke:#fff;stroke-width:1" width="12" height="12" viewBox="0 0 12 12"><path d="M6 2.500H2.500a1 1 0 0 0-1 1v6a1 1 0 0 0 1 1h6a1 1 0 0 0 1-1V7"/><circle cx="5.500" cy="7" r=".8" fill="#fff"/><path d="M9 1v4M7 3h4"/></svg>
<div class="t" style="left:932px;top:600px;color:#fff;letter-spacing:0">Generate</div>
</body></html>
